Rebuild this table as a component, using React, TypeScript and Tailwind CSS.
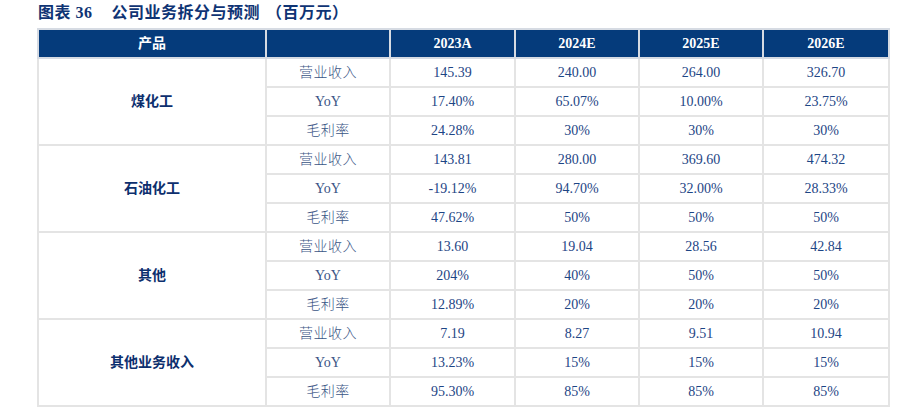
import React from "react";

const groups = [
  {
    name: "煤化工",
    rows: [
      ["营业收入", "145.39", "240.00", "264.00", "326.70"],
      ["YoY", "17.40%", "65.07%", "10.00%", "23.75%"],
      ["毛利率", "24.28%", "30%", "30%", "30%"],
    ],
  },
  {
    name: "石油化工",
    rows: [
      ["营业收入", "143.81", "280.00", "369.60", "474.32"],
      ["YoY", "-19.12%", "94.70%", "32.00%", "28.33%"],
      ["毛利率", "47.62%", "50%", "50%", "50%"],
    ],
  },
  {
    name: "其他",
    rows: [
      ["营业收入", "13.60", "19.04", "28.56", "42.84"],
      ["YoY", "204%", "40%", "50%", "50%"],
      ["毛利率", "12.89%", "20%", "20%", "20%"],
    ],
  },
  {
    name: "其他业务收入",
    rows: [
      ["营业收入", "7.19", "8.27", "9.51", "10.94"],
      ["YoY", "13.23%", "15%", "15%", "15%"],
      ["毛利率", "95.30%", "85%", "85%", "85%"],
    ],
  },
];

const font = { fontFamily: '"Liberation Serif", "Noto Sans CJK SC", serif' };

export default function App() {
  return (
    <div className="w-[914px] h-[416px] bg-white overflow-hidden" style={font}>
      <div className="pl-[38px] pt-[3px] h-[28px] text-[16px] font-bold text-[#0f3474] tracking-[0.5px] leading-[20px] flex">
        <span>图表 36</span>
        <span className="ml-[19px]">公司业务拆分与预测</span>
        <span className="pl-[6px]">（</span>
        <span>百万元</span>
        <span>）</span>
      </div>
      <div className="pl-[37px]">
        <table className="border-collapse table-fixed w-[851px] text-[14px]">
          <colgroup>
            <col className="w-[228px]" />
            <col className="w-[124px]" />
            <col className="w-[125px]" />
            <col className="w-[124px]" />
            <col className="w-[124px]" />
            <col className="w-[126px]" />
          </colgroup>
          <thead>
            <tr className="h-[29px] bg-[#053b7b] text-white font-bold">
              {["产品", "", "2023A", "2024E", "2025E", "2026E"].map((h, i) => (
                <th
                  key={i}
                  className="border-2 border-[#d6dbe3] p-0 text-center font-bold leading-none"
                >
                  {h}
                </th>
              ))}
            </tr>
          </thead>
          <tbody>
            {groups.map((g) =>
              g.rows.map((r, ri) => (
                <tr key={g.name + ri} className="h-[29px]">
                  {ri === 0 && (
                    <td
                      rowSpan={3}
                      className="border-2 border-[#e4e4e4] p-0 text-center font-bold text-[#0d2f6e]"
                    >
                      {g.name}
                    </td>
                  )}
                  {r.map((c, ci) => (
                    <td
                      key={ci}
                      className={
                        "border-2 border-[#e4e4e4] p-0 text-center leading-none " +
                        (ci === 0
                          ? c === "YoY"
                            ? "text-[#3a5585]"
                            : "text-[#3a5585] tracking-[0.5px] font-light"
                          : "text-[#1d4585]")
                      }
                    >
                      {c}
                    </td>
                  ))}
                </tr>
              ))
            )}
          </tbody>
        </table>
      </div>
    </div>
  );
}
